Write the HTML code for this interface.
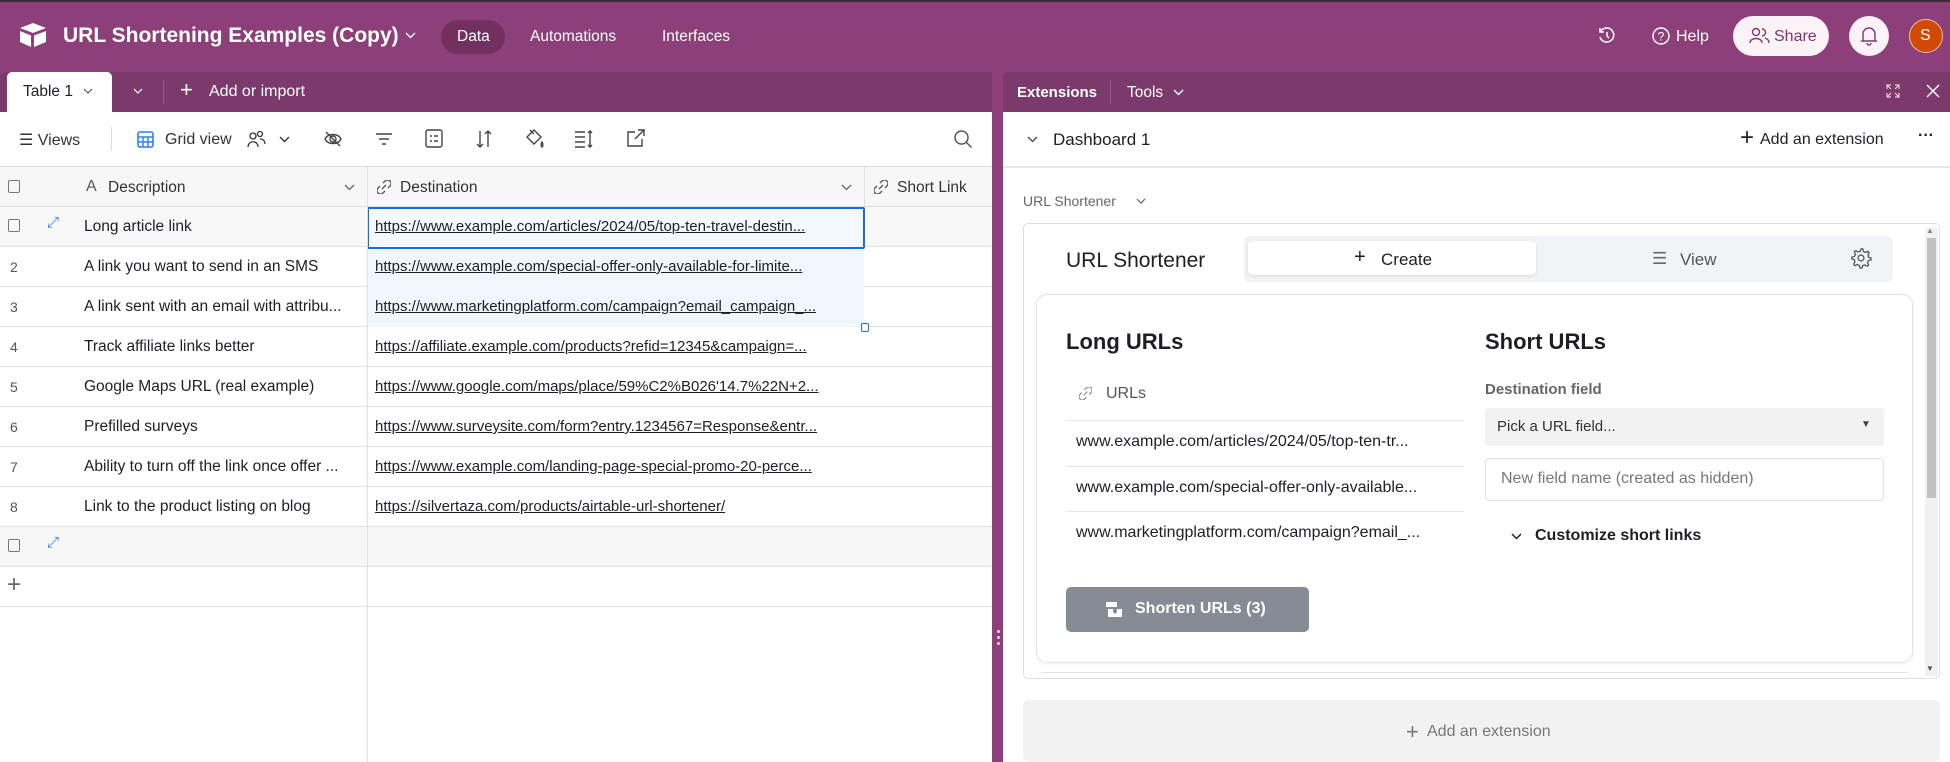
<!DOCTYPE html>
<html><head><meta charset="utf-8">
<style>
*{box-sizing:border-box;margin:0;padding:0}
body{width:1950px;height:762px;overflow:hidden;font-family:"Liberation Sans",sans-serif;background:#8c3f78;position:relative;color:#1d1f25}
.a{position:absolute}
.t{position:absolute;white-space:nowrap}
svg{position:absolute}
.w{color:#fff}
.row{position:absolute;left:0;width:992px;height:40px;border-bottom:1px solid #e1e1e1}
.num{position:absolute;left:10px;top:12px;font-size:14px;color:#555}
.desc{position:absolute;left:84px;top:11px;font-size:15.5px;color:#1d1f25}
.url{position:absolute;left:375px;top:11px;font-size:15px;color:#1d1f25;text-decoration:underline;width:480px;overflow:hidden;text-overflow:ellipsis;white-space:nowrap}
.vl{position:absolute;top:0;bottom:0;width:1px;background:#e1e1e1}
</style></head><body>
<div class="a" style="left:0;top:0;width:1950px;height:2px;background:#3b2b38"></div>
<svg style="left:18px;top:22px" width="30" height="26" viewBox="0 0 30 26"><path d="M15 1 L28 6 L15 11 L2 6Z" fill="#fff"/><path d="M2 9 L13 13.5 V25 L2 20Z" fill="#fff"/><path d="M16 13.5 L28 9 V20 L16 25Z" fill="#fff"/></svg>
<div class="t w" style="left:63px;top:24px;font-size:21px;font-weight:bold">URL Shortening Examples (Copy)</div>
<svg style="left:405px;top:32px" width="11" height="7" viewBox="0 0 11 7"><path d="M1 1 L5.5 5.5 L10 1" fill="none" stroke="#fff" stroke-width="1.4"/></svg>
<div class="a" style="left:441px;top:20px;width:64px;height:34px;border-radius:17px;background:#71305f"></div>
<div class="t w" style="left:457px;top:28px;font-size:15.5px">Data</div>
<div class="t w" style="left:530px;top:28px;font-size:15.5px">Automations</div>
<div class="t w" style="left:662px;top:28px;font-size:15.5px">Interfaces</div>
<svg style="left:1597px;top:26px" width="20" height="20" viewBox="0 0 20 20"><path d="M4 5 A7 7 0 1 1 3 11" fill="none" stroke="#fff" stroke-width="1.5"/><path d="M3 2 V6 H7" fill="none" stroke="#fff" stroke-width="1.5"/><path d="M10 6 V10 L12 12" fill="none" stroke="#fff" stroke-width="1.5"/></svg>
<svg style="left:1652px;top:27px" width="18" height="18" viewBox="0 0 18 18"><circle cx="9" cy="9" r="8" fill="none" stroke="#fff" stroke-width="1.4"/><text x="9" y="13.5" font-size="12" text-anchor="middle" fill="#fff" font-family="Liberation Sans">?</text></svg>
<div class="t w" style="left:1676px;top:28px;font-size:16px">Help</div>
<div class="a" style="left:1733px;top:16px;width:96px;height:40px;border-radius:20px;background:#fbf2f8"></div>
<svg style="left:1749px;top:27px" width="22" height="18" viewBox="0 0 22 18"><circle cx="7" cy="5" r="3.5" fill="none" stroke="#7a3a6a" stroke-width="1.4"/><path d="M1 16 C1 10 13 10 13 16" fill="none" stroke="#7a3a6a" stroke-width="1.4"/><path d="M13 2 A3.5 3.5 0 0 1 13 9 M16 11 C19 12 20 14 20 16" fill="none" stroke="#7a3a6a" stroke-width="1.4"/></svg>
<div class="t" style="left:1774px;top:28px;font-size:16px;color:#7a3a6a">Share</div>
<div class="a" style="left:1849px;top:16px;width:40px;height:40px;border-radius:20px;background:#fbf2f8"></div>
<svg style="left:1859px;top:25px" width="20" height="22" viewBox="0 0 20 22"><path d="M4 15 V9 A6 6 0 0 1 16 9 V15 L17 16 H3Z" fill="none" stroke="#7a3a6a" stroke-width="1.4"/><path d="M8 18 A2 2 0 0 0 12 18" fill="none" stroke="#7a3a6a" stroke-width="1.4"/></svg>
<div class="a" style="left:1909px;top:19px;width:34px;height:34px;border-radius:17px;background:#d04a05;border:1px solid #f3c0a0"></div>
<div class="t" style="left:1920px;top:27px;font-size:16px;color:#fff">S</div>

<div class="a" style="left:0;top:72px;width:992px;height:40px;background:#7b3a6b;border-top-left-radius:6px"></div>
<div class="a" style="left:7px;top:72px;width:105px;height:41px;background:#fff;border-radius:5px 5px 0 0"></div>
<div class="t" style="left:23px;top:83px;font-size:15.5px">Table 1</div>
<svg style="left:83px;top:88px" width="10" height="6" viewBox="0 0 10 6"><path d="M1 1 L5 5 L9 1" fill="none" stroke="#555" stroke-width="1.2"/></svg>
<svg style="left:133px;top:88px" width="10" height="6" viewBox="0 0 10 6"><path d="M1 1 L5 5 L9 1" fill="none" stroke="#fff" stroke-width="1.2"/></svg>
<div class="a" style="left:163px;top:80px;width:1px;height:24px;background:#9a5a88"></div>
<div class="t w" style="left:180px;top:77px;font-size:22px;font-weight:300">+</div>
<div class="t w" style="left:209px;top:83px;font-size:16px">Add or import</div>

<div class="a" style="left:0;top:112px;width:992px;height:650px;background:#fff"></div>
<div class="t" style="left:19px;top:130px;font-size:16px;color:#333">☰ Views</div>
<div class="a" style="left:111px;top:127px;width:1px;height:24px;background:#ddd"></div>
<svg style="left:137px;top:131px" width="17" height="17" viewBox="0 0 17 17"><rect x="1" y="1" width="15" height="15" rx="2" fill="none" stroke="#2d7ff9" stroke-width="1.6"/><path d="M1 6 H16 M1 11 H16 M6 6 V16 M11 6 V16" stroke="#2d7ff9" stroke-width="1.4"/></svg>
<div class="t" style="left:165px;top:131px;font-size:16px;color:#333">Grid view</div>
<svg style="left:245px;top:130px" width="22" height="18" viewBox="0 0 22 18"><circle cx="8" cy="6" r="3" fill="none" stroke="#333" stroke-width="1.3"/><circle cx="15" cy="4" r="2.5" fill="none" stroke="#333" stroke-width="1.3"/><path d="M3 17 C3 10 13 10 13 17 M15 9 C19 9 20 12 20 14" fill="none" stroke="#333" stroke-width="1.3"/></svg>
<svg style="left:279px;top:136px" width="11" height="7" viewBox="0 0 11 7"><path d="M1 1 L5.5 5.5 L10 1" fill="none" stroke="#333" stroke-width="1.4"/></svg>
<svg style="left:323px;top:129px" width="20" height="20" viewBox="0 0 20 20" fill="none" stroke="#444" stroke-width="1.4"><path d="M2 10 C5 4 15 4 18 10 C15 16 5 16 2 10Z"/><circle cx="10" cy="10" r="3"/><path d="M3 3 L17 17"/></svg>
<svg style="left:375px;top:131px" width="18" height="16" viewBox="0 0 18 16" stroke="#444" stroke-width="1.5"><path d="M1 3 H17 M4 8 H14 M7 13 H11"/></svg>
<svg style="left:425px;top:129px" width="18" height="19" viewBox="0 0 18 19" fill="none" stroke="#444" stroke-width="1.4"><rect x="1" y="1" width="16" height="17" rx="2"/><path d="M5 7 H7 M9 7 H13 M5 12 H7 M9 12 H13"/></svg>
<svg style="left:475px;top:129px" width="18" height="20" viewBox="0 0 18 20" fill="none" stroke="#444" stroke-width="1.4"><path d="M5 2 V18 M2 15 L5 18 L8 15 M13 18 V2 M10 5 L13 2 L16 5"/></svg>
<svg style="left:524px;top:128px" width="22" height="22" viewBox="0 0 22 22" fill="none" stroke="#444" stroke-width="1.4"><path d="M3 9 L10 2 L17 9 L10 16Z"/><path d="M6 2 L10 6"/><path d="M18 14 C18 14 20 17 18 19 C16 17 18 14 18 14Z"/></svg>
<svg style="left:574px;top:129px" width="20" height="20" viewBox="0 0 20 20" fill="none" stroke="#444" stroke-width="1.4"><path d="M1 3 H11 M1 8 H11 M1 13 H11 M1 18 H11 M16 2 V18 M14 4 L16 2 L18 4 M14 16 L16 18 L18 16"/></svg>
<svg style="left:626px;top:128px" width="20" height="20" viewBox="0 0 20 20" fill="none" stroke="#444" stroke-width="1.4"><path d="M9 4 H2 V18 H16 V11 M12 2 H18 V8 M18 2 L9 11"/></svg>
<svg style="left:953px;top:129px" width="20" height="20" viewBox="0 0 20 20" fill="none" stroke="#555" stroke-width="1.5"><circle cx="8.5" cy="8.5" r="6.5"/><path d="M13.5 13.5 L18.5 18.5"/></svg>

<div class="a" style="left:0;top:166px;width:992px;height:41px;background:#f7f7f7;border-top:1px solid #dcdcdc;border-bottom:1px solid #dcdcdc"></div>
<div class="a" style="left:8px;top:180px;width:12px;height:13px;border:1px solid #777;border-radius:2px"></div>
<div class="t" style="left:86px;top:178px;font-size:16px;color:#555">A</div>
<div class="t" style="left:108px;top:179px;font-size:15.5px;color:#333">Description</div>
<svg style="left:344px;top:184px" width="11" height="7" viewBox="0 0 11 7"><path d="M1 1 L5.5 5.5 L10 1" fill="none" stroke="#666" stroke-width="1.3"/></svg>
<svg style="left:377px;top:180px" width="14" height="14" viewBox="0 0 14 14" fill="none" stroke="#555" stroke-width="1.3"><path d="M6 3 L8 1 A3 3 0 0 1 13 6 L11 8 M8 11 L6 13 A3 3 0 0 1 1 8 L3 6 M5 9 L9 5"/></svg>
<div class="t" style="left:400px;top:179px;font-size:15.5px;color:#333">Destination</div>
<svg style="left:841px;top:184px" width="11" height="7" viewBox="0 0 11 7"><path d="M1 1 L5.5 5.5 L10 1" fill="none" stroke="#666" stroke-width="1.3"/></svg>
<svg style="left:874px;top:180px" width="14" height="14" viewBox="0 0 14 14" fill="none" stroke="#555" stroke-width="1.3"><path d="M6 3 L8 1 A3 3 0 0 1 13 6 L11 8 M8 11 L6 13 A3 3 0 0 1 1 8 L3 6 M5 9 L9 5"/></svg>
<div class="t" style="left:897px;top:179px;font-size:15.5px;color:#333">Short Link</div>

<div class="row" style="top:207px;background:#f8f8f8"><div class="a" style="left:8px;top:12px;width:12px;height:13px;border:1px solid #777;border-radius:2px"></div><div class="t" style="left:47px;top:7px;font-size:15px;color:#2d7ff9">⤢</div><div class="desc">Long article link</div></div>
<div class="row" style="top:247px"><div class="num">2</div><div class="desc">A link you want to send in an SMS</div></div>
<div class="row" style="top:287px"><div class="num">3</div><div class="desc">A link sent with an email with attribu...</div></div>
<div class="row" style="top:327px"><div class="num">4</div><div class="desc">Track affiliate links better</div></div>
<div class="row" style="top:367px"><div class="num">5</div><div class="desc">Google Maps URL (real example)</div></div>
<div class="row" style="top:407px"><div class="num">6</div><div class="desc">Prefilled surveys</div></div>
<div class="row" style="top:447px"><div class="num">7</div><div class="desc">Ability to turn off the link once offer ...</div></div>
<div class="row" style="top:487px"><div class="num">8</div><div class="desc">Link to the product listing on blog</div></div>
<div class="row" style="top:527px;background:#f7f7f7"><div class="a" style="left:8px;top:12px;width:12px;height:13px;border:1px solid #777;border-radius:2px"></div><div class="t" style="left:47px;top:7px;font-size:15px;color:#2d7ff9">⤢</div></div>
<div class="row" style="top:567px"><div class="t" style="left:7px;top:4px;font-size:24px;color:#666;font-weight:300">+</div></div>
<div class="a" style="left:368px;top:247px;width:496px;height:80px;background:#f1f6fe"></div>
<div class="a" style="left:367px;top:207px;width:498px;height:42px;border:2px solid #166ee1;border-radius:2px;background:#f4f8ff"></div>
<div class="a" style="left:861px;top:323px;width:8px;height:9px;border:1.5px solid #166ee1;border-radius:2px;background:#fff"></div>
<div class="vl" style="left:367px;top:167px;height:595px"></div>
<div class="vl" style="left:864px;top:167px;height:40px"></div>
<div class="url" style="top:218px">https://www.example.com/articles/2024/05/top-ten-travel-destin...</div>
<div class="url" style="top:258px">https://www.example.com/special-offer-only-available-for-limite...</div>
<div class="url" style="top:298px">https://www.marketingplatform.com/campaign?email_campaign_...</div>
<div class="url" style="top:338px">https://affiliate.example.com/products?refid=12345&amp;campaign=...</div>
<div class="url" style="top:378px">https://www.google.com/maps/place/59%C2%B026'14.7%22N+2...</div>
<div class="url" style="top:418px">https://www.surveysite.com/form?entry.1234567=Response&amp;entr...</div>
<div class="url" style="top:458px">https://www.example.com/landing-page-special-promo-20-perce...</div>
<div class="url" style="top:498px">https://silvertaza.com/products/airtable-url-shortener/</div>

<div class="a" style="left:997px;top:630px;width:3px;height:3px;background:#ddd;border-radius:2px;box-shadow:0 6px 0 #ddd,0 12px 0 #ddd"></div>

<div class="a" style="left:1003px;top:72px;width:947px;height:40px;background:#7b3a6b;border-top-left-radius:6px"></div>
<div class="t w" style="left:1017px;top:84px;font-size:15px;font-weight:bold">Extensions</div>
<div class="a" style="left:1110px;top:80px;width:1px;height:24px;background:#9a5a88"></div>
<div class="t w" style="left:1127px;top:84px;font-size:15.5px">Tools</div>
<svg style="left:1173px;top:89px" width="11" height="7" viewBox="0 0 11 7"><path d="M1 1 L5.5 5.5 L10 1" fill="none" stroke="#fff" stroke-width="1.4"/></svg>
<svg style="left:1886px;top:84px" width="14" height="14" viewBox="0 0 14 14" fill="none" stroke="#e8cfe0" stroke-width="1.2"><path d="M1 5 V1 H5 M9 1 H13 V5 M13 9 V13 H9 M5 13 H1 V9 M1 1 L5 5 M13 1 L9 5 M13 13 L9 9 M1 13 L5 9"/></svg>
<svg style="left:1926px;top:84px" width="14" height="14" viewBox="0 0 14 14" stroke="#fff" stroke-width="1.4"><path d="M1 1 L13 13 M13 1 L1 13"/></svg>
<div class="a" style="left:1003px;top:112px;width:947px;height:650px;background:#fff"></div>
<div class="a" style="left:1003px;top:166px;width:947px;height:2px;background:#e6e6e6"></div>
<svg style="left:1027px;top:136px" width="11" height="7" viewBox="0 0 11 7"><path d="M1 1 L5.5 5.5 L10 1" fill="none" stroke="#444" stroke-width="1.3"/></svg>
<div class="t" style="left:1053px;top:130px;font-size:17px">Dashboard 1</div>
<div class="t" style="left:1740px;top:124px;font-size:24px;font-weight:300">+</div>
<div class="t" style="left:1760px;top:131px;font-size:16px">Add an extension</div>
<div class="t" style="left:1918px;top:127px;font-size:16px;font-weight:bold">···</div>
<div class="t" style="left:1023px;top:193px;font-size:14px;color:#666">URL Shortener</div>
<svg style="left:1136px;top:198px" width="10" height="6" viewBox="0 0 10 6"><path d="M1 1 L5 5 L9 1" fill="none" stroke="#666" stroke-width="1.2"/></svg>

<div class="a" style="left:1023px;top:223px;width:917px;height:456px;border:1px solid #dedede;border-radius:5px"></div>
<div class="a" style="left:1925px;top:228px;width:13px;height:448px;background:#f1f1f1"></div>
<div class="a" style="left:1927px;top:238px;width:9px;height:260px;background:#c1c1c1"></div>
<div class="t" style="left:1926px;top:226px;font-size:8px;color:#888">▲</div>
<div class="t" style="left:1926px;top:664px;font-size:8px;color:#555">▼</div>
<div class="t" style="left:1066px;top:249px;font-size:21px">URL Shortener</div>
<div class="a" style="left:1244px;top:236px;width:649px;height:46px;background:#f1f3f6;border-radius:6px"></div>
<div class="a" style="left:1248px;top:241px;width:288px;height:34px;background:#fff;border-radius:5px;box-shadow:0 1px 3px rgba(0,0,0,.12)"></div>
<div class="t" style="left:1354px;top:246px;font-size:20px;font-weight:300">+</div>
<div class="t" style="left:1381px;top:250px;font-size:17px">Create</div>
<div class="t" style="left:1652px;top:249px;font-size:17px;color:#666">☰</div>
<div class="t" style="left:1680px;top:250px;font-size:17px;color:#555">View</div>
<svg style="left:1850px;top:247px" width="22" height="22" viewBox="0 0 24 24" fill="none" stroke="#555" stroke-width="1.4"><circle cx="12" cy="12" r="3.2"/><path d="M12 2 L14 2 L14.6 4.8 L17 6 L19.6 4.6 L21 6.3 L19.6 8.8 L20.3 11.2 L23 12 L23 14 L20.2 14.7 L19 17 L20.4 19.6 L18.7 21 L16.2 19.6 L13.8 20.3 L13 23 L11 23 L10.3 20.2 L8 19 L5.4 20.4 L4 18.7 L5.4 16.2 L4.7 13.8 L2 13 L2 11 L4.8 10.3 L6 8 L4.6 5.4 L6.3 4 L8.8 5.4 L11.2 4.7Z"/></svg>

<div class="a" style="left:1036px;top:294px;width:877px;height:369px;border:1px solid #e3e3e3;border-radius:11px;box-shadow:0 1px 4px rgba(0,0,0,.06)"></div>
<div class="a" style="left:1036px;top:672px;width:877px;height:8px;border-top:1px solid #e3e3e3;border-radius:10px 10px 0 0"></div>
<div class="t" style="left:1066px;top:329px;font-size:22px;font-weight:bold">Long URLs</div>
<div class="t" style="left:1485px;top:329px;font-size:22px;font-weight:bold">Short URLs</div>
<svg style="left:1079px;top:387px" width="13" height="13" viewBox="0 0 14 14" fill="none" stroke="#888" stroke-width="1.2"><path d="M6 3 L8 1 A3 3 0 0 1 13 6 L11 8 M8 11 L6 13 A3 3 0 0 1 1 8 L3 6 M5 9 L9 5"/></svg>
<div class="t" style="left:1106px;top:385px;font-size:16px;color:#555">URLs</div>
<div class="a" style="left:1066px;top:420px;width:398px;height:1px;background:#e6e6e6"></div>
<div class="a" style="left:1066px;top:466px;width:398px;height:1px;background:#e6e6e6"></div>
<div class="a" style="left:1066px;top:511px;width:398px;height:1px;background:#e6e6e6"></div>
<div class="t" style="left:1076px;top:433px;font-size:16px">www.example.com/articles/2024/05/top-ten-tr...</div>
<div class="t" style="left:1076px;top:479px;font-size:16px">www.example.com/special-offer-only-available...</div>
<div class="t" style="left:1076px;top:524px;font-size:16px">www.marketingplatform.com/campaign?email_...</div>
<div class="t" style="left:1485px;top:381px;font-size:15px;color:#666;font-weight:bold">Destination field</div>
<div class="a" style="left:1485px;top:408px;width:399px;height:38px;background:#f2f2f2;border-radius:3px"></div>
<div class="t" style="left:1497px;top:418px;font-size:15px;color:#333">Pick a URL field...</div>
<div class="t" style="left:1861px;top:419px;font-size:10px;color:#444">▼</div>
<div class="a" style="left:1485px;top:458px;width:399px;height:43px;border:1px solid #e0e0e0;border-radius:4px"></div>
<div class="t" style="left:1501px;top:470px;font-size:16px;color:#777">New field name (created as hidden)</div>
<svg style="left:1511px;top:533px" width="11" height="7" viewBox="0 0 11 7"><path d="M1 1 L5.5 5.5 L10 1" fill="none" stroke="#222" stroke-width="1.5"/></svg>
<div class="t" style="left:1535px;top:527px;font-size:16px;font-weight:bold">Customize short links</div>
<div class="a" style="left:1066px;top:587px;width:243px;height:45px;background:#878b93;border-radius:5px"></div>
<svg style="left:1106px;top:602px" width="16" height="15" viewBox="0 0 16 15" fill="#fff"><rect x="0" y="0" width="11" height="5"/><path d="M2 7 H7 V10 L9 12 L11 10 V7 H16 V15 H2Z"/></svg>
<div class="t" style="left:1135px;top:600px;font-size:16px;color:#fff;font-weight:bold">Shorten URLs (3)</div>

<div class="a" style="left:1023px;top:700px;width:917px;height:62px;background:#f2f2f2;border-radius:6px"></div>
<div class="t" style="left:1406px;top:719px;font-size:22px;color:#777;font-weight:300">+</div>
<div class="t" style="left:1427px;top:723px;font-size:16px;color:#777">Add an extension</div>
</body></html>
